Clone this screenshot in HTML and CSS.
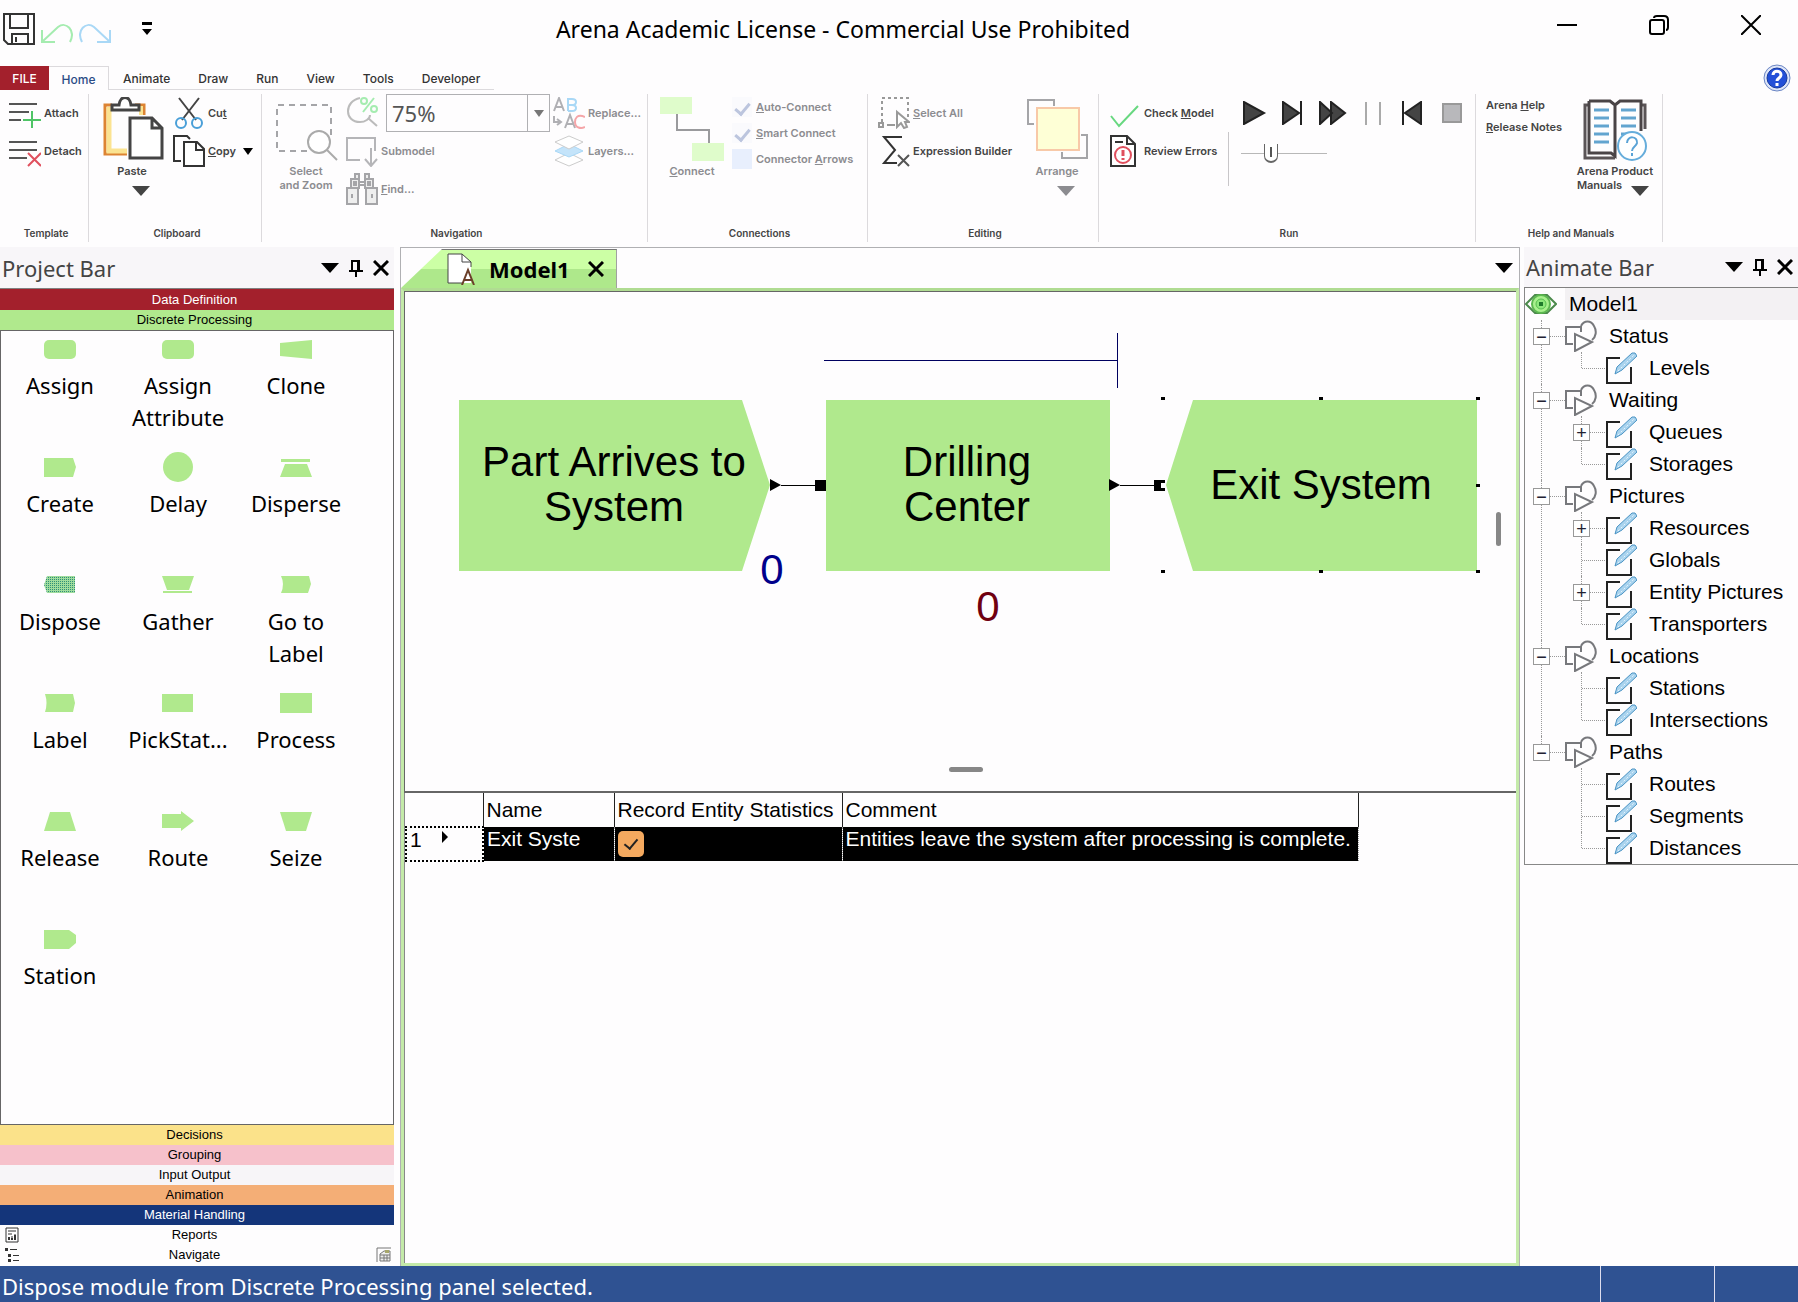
FILE: index.html
```html
<!DOCTYPE html>
<html lang="en">
<head>
<meta charset="utf-8">
<title>Arena Academic License - Commercial Use Prohibited</title>
<link rel="stylesheet" href="styles.css">
</head>
<body>
<svg class="sprite" aria-hidden="true">
  <symbol id="shapes" viewBox="0 0 32 32"><g fill="none" stroke="#77787c" stroke-width="2"><path d="M8 24H1V7h15v5"/><path d="M16 6c3-6 10-6 13 0 3 5 2 11-2 14"/><path fill="#fff" d="M10 14v17l17-9z"/></g></symbol>
  <symbol id="edit" viewBox="0 0 32 32"><path d="M15 6H2v25h24V15" fill="none" stroke="#222" stroke-width="2"/><path d="M10 22l2-7L27 1h3l2 3-15 14z" fill="#a9d3ee" stroke="#4a93c4" stroke-width="1"/><path d="M13 19L29 3" stroke="#e8f5fd" stroke-width="1" stroke-dasharray="2 2"/></symbol>
  <symbol id="down" viewBox="0 0 18 10"><path d="M0 0h18l-9 10z" fill="currentColor"/></symbol>
  <symbol id="pin" viewBox="0 0 14 18"><path d="M3 11V2h7v9M0 12h14M7 12v6" fill="none" stroke="#000" stroke-width="2"/><path d="M8 2h3v9H8z"/></symbol>
  <symbol id="cross" viewBox="0 0 16 16"><path d="M1 1l14 14M15 1L1 15" stroke="#000" stroke-width="3" fill="none"/></symbol>
  <symbol id="pausebars" viewBox="0 0 30 24"><path d="M7 1v23M21 1v23" stroke="#aaa" stroke-width="2"/></symbol>
</svg>

<header class="titlebar">
  <div class="quick">
    <button class="bare" aria-label="Save"><svg width="32" height="32" viewBox="0 0 32 32"><path d="M1 1h30v30H5l-4-4zM7 1v14h18V1M9 31V21h16v10M13 24v5" fill="none" stroke="#333" stroke-width="2"/></svg></button>
    <button class="bare" aria-label="Undo"><svg width="32" height="32" viewBox="0 0 32 32"><path d="M1 17v12h13M2 28L17 14c8-6 18 3 12 15" fill="none" stroke="#a5ecb0" stroke-width="2"/></svg></button>
    <button class="bare" aria-label="Redo"><svg width="32" height="32" viewBox="0 0 32 32"><path d="M31 17v12H18M30 28L15 14C7 8-3 17 3 29" fill="none" stroke="#a9d8f6" stroke-width="2"/></svg></button>
    <button class="bare customize" aria-label="Customize toolbar"><svg width="10" height="14" viewBox="0 0 10 14"><path d="M0 0h10v3H0zM0 7h10l-5 6z"/></svg></button>
  </div>
  <h1>Arena Academic License - Commercial Use Prohibited</h1>
  <div class="window-buttons">
    <button class="bare" aria-label="Minimize"><svg width="20" height="20" viewBox="0 0 20 20"><path d="M0 10h20" stroke="#000" stroke-width="2"/></svg></button>
    <button class="bare" aria-label="Restore"><svg width="20" height="20" viewBox="0 0 20 20"><g fill="none" stroke="#000" stroke-width="2"><rect x="1" y="5" width="14" height="14" rx="2"/><path d="M5 3q0-2 3-2h7q4 0 4 4v7q0 3-2 3"/></g></svg></button>
    <button class="bare" aria-label="Close"><svg width="20" height="20" viewBox="0 0 20 20"><path d="M0 0l20 20M20 0L0 20" stroke="#000" stroke-width="2"/></svg></button>
  </div>
</header>

<nav class="tabs">
  <button class="tab file">FILE</button><button class="tab active">Home</button><button class="tab">Animate</button><button class="tab">Draw</button><button class="tab">Run</button><button class="tab">View</button><button class="tab">Tools</button><button class="tab">Developer</button>
  <button class="bare help" aria-label="Help"><svg width="28" height="28" viewBox="0 0 28 28"><circle cx="14" cy="14" r="13" fill="#dfe6f8" stroke="#6b86c4" stroke-width="1"/><circle cx="14" cy="14" r="10" fill="#2350d8" stroke="#173a9c"/><path d="M10 11c0-5 8-5 8 0 0 3-4 3-4 6M14 19v3" fill="none" stroke="#fff" stroke-width="3"/></svg></button>
</nav>

<div class="ribbon">
  <section class="group g-template">
    <div class="group-body">
      <div class="stack">
        <button class="cmd"><svg width="32" height="32" viewBox="0 0 32 32"><path d="M0 7h28M0 15h20M0 23h12" stroke="#555" stroke-width="2"/><path d="M23 14v17M14 23h18" stroke="#4fc466" stroke-width="2"/></svg>Attach</button>
        <button class="cmd"><svg width="32" height="32" viewBox="0 0 32 32"><path d="M0 7h28M0 15h28M0 23h18" stroke="#555" stroke-width="2"/><path d="M19 18l13 13M32 18L19 31" stroke="#e0505e" stroke-width="2"/></svg>Detach</button>
      </div>
    </div>
    <h2>Template</h2>
  </section>
  <section class="group g-clipboard">
    <div class="group-body">
      <button class="big"><svg width="64" height="64" viewBox="0 0 64 64"><path d="M12 8H5v49h22" fill="none" stroke="#dd8433" stroke-width="3"/><path d="M9 10v44h18" fill="none" stroke="#fbe391" stroke-width="5"/><path d="M35 8h9v10" fill="none" stroke="#dd8433" stroke-width="3"/><path d="M36 11h5v7" fill="none" stroke="#fbe391" stroke-width="4"/><path d="M12 13V8h7c1-10 11-10 12 0h8v5z" fill="#fff" stroke="#444" stroke-width="3"/><path d="M30 21h22l10 10v30H30zM52 21v10h10" fill="#fff" stroke="#444" stroke-width="3"/></svg><span>Paste</span><svg class="drop shift" width="18" height="10"><use href="#down"/></svg></button>
      <div class="stack">
        <button class="cmd"><svg width="32" height="32" viewBox="0 0 32 32"><path d="M6 1l17 22M26 1L9 23" stroke="#444" stroke-width="2"/><circle cx="8" cy="26" r="5" fill="none" stroke="#4a9fd8" stroke-width="2"/><circle cx="24" cy="26" r="5" fill="none" stroke="#4a9fd8" stroke-width="2"/></svg><span>Cu<u>t</u></span></button>
        <button class="cmd"><svg width="32" height="32" viewBox="0 0 32 32"><path d="M8 26H1V1h13l3 3" fill="none" stroke="#333" stroke-width="2"/><path d="M11 7h13l7 7v17H11zM23 8v7h8" fill="#fff" stroke="#333" stroke-width="2"/></svg><span><u>C</u>opy</span><svg class="copy-drop" width="10" height="7" viewBox="0 0 10 7"><path d="M0 0h10L5 7z"/></svg></button>
      </div>
    </div>
    <h2>Clipboard</h2>
  </section>
  <section class="group g-navigation">
    <div class="group-body">
      <button class="big dim"><svg width="64" height="64" viewBox="0 0 64 64"><path d="M33 54H3V8h54v32" fill="none" stroke="#a5a5a8" stroke-width="2" stroke-dasharray="6 5"/><circle cx="45" cy="45" r="11" fill="#fff" stroke="#aaa" stroke-width="2"/><path d="M53 53l10 10" stroke="#aaa" stroke-width="2"/></svg><span>Select<br>and Zoom</span></button>
      <div class="stack">
        <div class="zoom-row"><svg width="32" height="32" viewBox="0 0 32 32"><path d="M14 1c-16 3-16 24 0 24 5 0 10-3 10-7M22 21l9 8" fill="none" stroke="#bbb" stroke-width="2"/><path d="M28 1L17 15" stroke="#a5ecb0" stroke-width="2"/><circle cx="18" cy="4" r="3" fill="none" stroke="#a5ecb0" stroke-width="2"/><circle cx="28" cy="12" r="3" fill="none" stroke="#a5ecb0" stroke-width="2"/></svg>
          <div class="combo"><input type="text" value="75%" aria-label="Zoom level"><button class="bare" aria-label="Choose zoom"><svg width="10" height="7" viewBox="0 0 10 7"><path d="M0 0h10L5 7z" fill="#777"/></svg></button></div></div>
        <button class="cmd dim"><svg width="32" height="32" viewBox="0 0 32 32"><path d="M14 25H1V3h28v13" fill="none" stroke="#b5b5b8" stroke-width="2"/><path d="M25 13v17M19 24l6 7 6-7" fill="none" stroke="#b5b5b8" stroke-width="2"/></svg>Submodel</button>
        <button class="cmd dim"><svg width="32" height="32" viewBox="0 0 32 32"><g fill="#eee" stroke="#a5a5a8" stroke-width="2"><path d="M9 1h4v5H9zM19 1h4v5h-4zM5 6h8v9H5zM19 6h8v9h-8zM1 15h11v16H1zM20 15h11v16H20zM8 9h2v3H8zM22 9h2v3h-2zM6 21v4M26 21v4M13 9h6M13 12h6"/></g></svg><span><u>F</u>ind...</span></button>
      </div>
      <div class="stack">
        <button class="cmd dim"><svg width="32" height="32" viewBox="0 0 32 32"><g fill="none" stroke-width="2"><path d="M1 14L6 1l5 13M3 10h6M12 31l5-13 5 13M14 27h6M1 19v6h6M4 22l4 3-4 3" stroke="#b0b0b4"/><path d="M15 1v13M15 2h4q4 0 4 3t-4 3h-4M19 8q4 0 4 3t-4 3h-4" stroke="#a9d8f6"/><path d="M32 20c-8-4-10 2-10 5 0 6 6 7 10 5" stroke="#f5a5a8"/></g></svg>Replace...</button>
        <button class="cmd dim"><svg width="32" height="32" viewBox="0 0 32 32"><path d="M2 25l14-7 14 7-14 6z" fill="#fff" stroke="#ccc"/><path d="M2 16l14-7 14 7-14 6z" fill="#c4e4fa" stroke="#a9d8f6"/><path d="M2 7l14-6 14 6-14 7z" fill="#fff" stroke="#ccc"/></svg>Layers...</button>
      </div>
    </div>
    <h2>Navigation</h2>
  </section>
  <section class="group g-connections">
    <div class="group-body">
      <button class="big dim"><svg width="64" height="64" viewBox="0 0 64 64"><path d="M17 17v16h32v14" fill="none" stroke="#9a9a9d" stroke-width="2"/><path d="M0 0h32v17H0zM32 46h32v18H32z" fill="#dffccb"/></svg><span><u>C</u>onnect</span></button>
      <div class="checks">
        <label class="check"><input type="checkbox" checked disabled><span><u>A</u>uto-Connect</span></label>
        <label class="check"><input type="checkbox" checked disabled><span><u>S</u>mart Connect</span></label>
        <label class="check"><input type="checkbox" disabled><span>Connector <u>A</u>rrows</span></label>
      </div>
    </div>
    <h2>Connections</h2>
  </section>
  <section class="group g-editing">
    <div class="group-body">
      <div class="stack">
        <button class="cmd dim"><svg width="32" height="32" viewBox="0 0 32 32"><path d="M4 25V1h26v22" fill="none" stroke="#999" stroke-width="2" stroke-dasharray="3 3"/><path d="M1 26h4v4H1zM9 28h8" fill="none" stroke="#999" stroke-width="2"/><path d="M19 15v15l4-4 3 5 3-1-2-5h4z" fill="#fff" stroke="#999" stroke-width="2"/></svg><span><u>S</u>elect All</span></button>
        <button class="cmd"><svg width="32" height="32" viewBox="0 0 32 32"><path d="M24 2H6l11 13L6 28h13" fill="none" stroke="#333" stroke-width="2"/><path d="M20 20l11 11M31 20L20 31" stroke="#555" stroke-width="2"/></svg>Expression Builder</button>
      </div>
      <button class="big dim"><svg width="64" height="64" viewBox="0 0 64 64"><path d="M9 27H3V3h26v6M56 38h6v23H37v-6" fill="none" stroke="#a5a5a8" stroke-width="2"/><rect x="12" y="11" width="42" height="42" fill="#feffd6" stroke="#f8c9a8" stroke-width="2"/></svg><span>Arrange</span><svg class="drop shift" width="18" height="10"><use href="#down"/></svg></button>
    </div>
    <h2>Editing</h2>
  </section>
  <section class="group g-run">
    <div class="group-body">
      <div class="stack">
        <button class="cmd"><svg width="32" height="32" viewBox="0 0 32 32"><path d="M2 19l8 10L29 9" fill="none" stroke="#68d880" stroke-width="2"/></svg><span>Check <u>M</u>odel</span></button>
        <button class="cmd"><svg width="32" height="32" viewBox="0 0 32 32"><path d="M2 1h16l8 8v22H2zM18 1v8h8M6 7h8" fill="#fff" stroke="#333" stroke-width="2"/><circle cx="14" cy="20" r="8" fill="#fff" stroke="#e0505e" stroke-width="2"/><path d="M14 15v6M14 23v2" stroke="#e0505e" stroke-width="3"/></svg>Review Errors</button>
      </div>
      <div class="rule"></div>
      <div class="player">
        <div class="transport">
          <button class="bare" aria-label="Go"><svg width="30" height="24" viewBox="0 0 30 24"><path d="M5 1v22l20-11z" fill="#444" stroke="#222" stroke-width="2"/></svg></button>
          <button class="bare" aria-label="Step"><svg width="30" height="24" viewBox="0 0 30 24"><path d="M4 1v22l16-11z" fill="#444" stroke="#222" stroke-width="2"/><path d="M22 0v24" stroke="#222" stroke-width="2"/></svg></button>
          <button class="bare" aria-label="Fast forward"><svg width="30" height="24" viewBox="0 0 30 24"><path d="M1 1v22l12-11zM12 1v22l14-11z" fill="#444" stroke="#222" stroke-width="2"/></svg></button>
          <button class="bare" aria-label="Pause"><svg width="30" height="24"><use href="#pausebars"/></svg></button>
          <button class="bare" aria-label="Start over"><svg width="30" height="24" viewBox="0 0 30 24"><path d="M22 1v22L6 12z" fill="#444" stroke="#222" stroke-width="2"/><path d="M4 0v24" stroke="#222" stroke-width="2"/></svg></button>
          <button class="bare" aria-label="End"><svg width="30" height="24" viewBox="0 0 30 24"><rect x="4" y="3" width="18" height="18" fill="#b8b8bb" stroke="#999" stroke-width="2"/></svg></button>
        </div>
        <input class="speed" type="range" min="0" max="100" value="32" aria-label="Run speed">
      </div>
    </div>
    <h2>Run</h2>
  </section>
  <section class="group g-help">
    <div class="group-body">
      <div class="links"><a href="#help">Arena <u>H</u>elp</a><a href="#notes"><u>R</u>elease Notes</a></div>
      <button class="big manuals"><svg width="64" height="64" viewBox="0 0 64 64"><path d="M6 8H2v53h30M58 8h4v24" fill="none" stroke="#5a5456" stroke-width="3"/><path d="M6 4h21l5 4 5-4h21v30M6 4v52h22l4 3V8" fill="none" stroke="#4a4446" stroke-width="3"/><path d="M11 13h15M11 21h15M11 29h15M11 37h15M11 45h15M38 13h15M38 21h15M38 29h15M38 37h7" stroke="#62a4cf" stroke-width="3"/><circle cx="49" cy="49" r="14" fill="#fff" stroke="#66addb" stroke-width="2"/><path d="M44 46c0-8 11-7 10 0-1 4-5 4-5 8M49 56v3" fill="none" stroke="#5aa3d6" stroke-width="2"/></svg><span>Arena Product</span><span class="manual-row">Manuals <svg class="drop" width="18" height="10"><use href="#down"/></svg></span></button>
    </div>
    <h2>Help and Manuals</h2>
  </section>
</div>

<main class="workspace">
  <aside class="dock project">
    <div class="dock-head"><h2>Project Bar</h2>
      <button class="bare" aria-label="Panel menu"><svg width="18" height="10"><use href="#down"/></svg></button><button class="bare" aria-label="Pin panel"><svg width="14" height="18"><use href="#pin"/></svg></button><button class="bare" aria-label="Close panel"><svg width="16" height="16"><use href="#cross"/></svg></button></div>
    <button class="panel p-red">Data Definition</button>
    <button class="panel p-green">Discrete Processing</button>
    <div class="modules">
      <button class="module"><svg viewBox="0 0 32 32"><rect y="7" width="32" height="19" rx="5"/></svg>Assign</button>
      <button class="module"><svg viewBox="0 0 32 32"><rect y="7" width="32" height="19" rx="5"/></svg>Assign Attribute</button>
      <button class="module"><svg viewBox="0 0 32 32"><path d="M0 10l32-3v19L0 23z"/></svg>Clone</button>
      <button class="module"><svg viewBox="0 0 32 32"><path d="M0 7h29l3 9-3 10H0z"/></svg>Create</button>
      <button class="module"><svg viewBox="0 0 32 32"><circle cx="16" cy="16" r="15"/></svg>Delay</button>
      <button class="module"><svg viewBox="0 0 32 32"><path d="M1 8h29v3H1zM5 13h22l5 13H0z"/></svg>Disperse</button>
      <button class="module"><svg viewBox="0 0 32 32"><defs><pattern id="dots" width="2" height="2" patternUnits="userSpaceOnUse"><rect width="2" height="2" fill="#9fdc9c"/><rect width="1" height="1" fill="#2f8f78"/></pattern></defs><path fill="url(#dots)" d="M3 7h28v17H3l-3-8z"/></svg>Dispose</button>
      <button class="module"><svg viewBox="0 0 32 32"><path d="M0 7h32l-5 14H5zM1 22h29v2H1z"/></svg>Gather</button>
      <button class="module"><svg viewBox="0 0 32 32"><path d="M1 7h28l2 8-3 9H1q4-9 0-17z"/></svg>Go to Label</button>
      <button class="module"><svg viewBox="0 0 32 32"><path d="M1 7h28l2 9-2 9H1q3-9 0-18z"/></svg>Label</button>
      <button class="module"><svg viewBox="0 0 32 32"><path d="M0 7h31v18H0z"/></svg>PickStat...</button>
      <button class="module"><svg viewBox="0 0 32 32"><path d="M0 6h32v20H0z"/></svg>Process</button>
      <button class="module"><svg viewBox="0 0 32 32"><path d="M6 7h20l6 19H0z"/></svg>Release</button>
      <button class="module"><svg viewBox="0 0 32 32"><path d="M0 9h19V6l13 10-13 10v-3H0z"/></svg>Route</button>
      <button class="module"><svg viewBox="0 0 32 32"><path d="M0 7h32l-6 19H6z"/></svg>Seize</button>
      <button class="module"><svg viewBox="0 0 32 32"><path d="M0 7h25l7 5v8l-7 6H0z"/></svg>Station</button>
    </div>
    <button class="panel p-yellow">Decisions</button>
    <button class="panel p-pink">Grouping</button>
    <button class="panel p-gray">Input Output</button>
    <button class="panel p-orange">Animation</button>
    <button class="panel p-navy">Material Handling</button>
    <button class="panel p-plain"><svg width="14" height="16" viewBox="0 0 14 16"><path d="M1 1h12v14H1zM3 4h8M3 7h4M4 13v-3M7 13V9M10 13V7" fill="none" stroke="#333" stroke-width="1"/><path d="M3 10h2v3H3zM6 11h2v2H6zM9 8h2v5H9z" fill="#333"/></svg><span>Reports</span></button>
    <button class="panel p-plain"><svg width="14" height="16" viewBox="0 0 14 16"><path d="M0 1h3v3H0zM3 7h3v3H3zM3 12h3v3H3zM5 2h7v1H5zM8 8h6v1H8zM8 13h6v1H8z" fill="#333"/></svg><span>Navigate</span><svg width="15" height="16" viewBox="0 0 15 16"><path d="M1 15V1h14" fill="none" stroke="#777"/><path d="M4 7l4-3h6v10H4zM4 8h10M4 11h10M8 8v6M11 8v6" fill="#eee" stroke="#777"/><path d="M9 3h4v3H9z" fill="#a7a76a"/></svg></button>
  </aside>

  <section class="document">
    <div class="doc-tabs">
      <div class="doc-tab"><svg width="30" height="32" viewBox="0 0 30 32"><path d="M1 1h14l9 8v21H1z" fill="#fff"/><path d="M15 30H1V1h14l9 8v5M15 1v8h9" fill="none" stroke="#444"/><path d="M15 32l6-15 6 15M17 27h8" fill="none" stroke="#6b3f2a" stroke-width="2"/></svg><span>Model1</span><button class="bare" aria-label="Close Model1"><svg width="16" height="16"><use href="#cross"/></svg></button></div>
      <button class="bare doc-list" aria-label="Open documents"><svg width="18" height="10"><use href="#down"/></svg></button>
    </div>
    <div class="doc-body">
      <div class="canvas">
        <svg class="flow" width="1110" height="499" viewBox="405 292 1110 499" role="img" aria-label="Process flowchart">
          <path class="crisp" d="M824 360h293v1H824zM1117 333h1v55h-1z" fill="#000060"/>
          <g fill="#b0e98d"><path d="M459 400h283l28 85-28 86H459zM826 400h284v171H826zM1193 400h284v171h-284l-27-86z"/></g>
          <path class="crisp" d="M781 485h34v1h-34zM1120 485h34v1h-34z"/>
          <path d="M770 479l11 6-11 6zM815 480h11v11h-11zM1109 479l11 6-11 6zM1154 480h11v3h-4v5h4v3h-11z"/>
          <path d="M1161 397h4v3h-4zM1319 397h4v3h-4zM1476 397h4v3h-4zM1161 570h4v3h-4zM1319 570h4v3h-4zM1476 570h4v3h-4zM1476 484h4v3h-4z"/>
          <g class="node-text"><text x="614" y="476">Part Arrives to</text><text x="614" y="521">System</text><text x="967" y="476">Drilling</text><text x="967" y="521">Center</text><text x="1321" y="499">Exit System</text></g>
          <g class="counter"><text class="blue" x="772" y="584">0</text><text class="maroon" x="988" y="621">0</text></g>
        </svg>
        <i class="thumb-v"></i><i class="thumb-h"></i>
      </div>
      <div class="sheet">
        <table>
          <colgroup><col class="c-row"><col class="c-name"><col class="c-record"><col class="c-comment"></colgroup>
          <thead><tr><th></th><th>Name</th><th>Record Entity Statistics</th><th>Comment</th></tr></thead>
          <tbody><tr><th scope="row"><span>1</span><svg width="6" height="12" viewBox="0 0 6 12"><path d="M0 0l6 6-6 6z"/></svg></th><td>Exit Syste</td><td><input type="checkbox" checked aria-label="Record entity statistics"></td><td>Entities leave the system after processing is complete.</td></tr></tbody>
        </table>
      </div>
    </div>
  </section>

  <aside class="dock animate">
    <div class="dock-head"><h2>Animate Bar</h2>
      <button class="bare" aria-label="Panel menu"><svg width="18" height="10"><use href="#down"/></svg></button><button class="bare" aria-label="Pin panel"><svg width="14" height="18"><use href="#pin"/></svg></button><button class="bare" aria-label="Close panel"><svg width="16" height="16"><use href="#cross"/></svg></button></div>
    <div class="tree">
      <div class="root"><svg width="32" height="32" viewBox="0 0 32 32"><path d="M1 16L10 7h12l9 9-9 9H10z" fill="#fff" stroke="#4c8a4c" stroke-width="2"/><circle cx="16" cy="16" r="9" fill="#a9f08e" stroke="#5cb850" stroke-width="2"/><circle cx="16" cy="16" r="5" fill="#8fe87c" stroke="#58c050"/><path d="M14 14h4v4h-4z" fill="#1f7a2c"/></svg><span>Model1</span></div>
      <ul class="level1">
        <li><div class="node"><button class="box">−</button><svg><use href="#shapes"/></svg>Status</div>
          <ul><li><div class="node"><svg><use href="#edit"/></svg>Levels</div></li></ul></li>
        <li><div class="node"><button class="box">−</button><svg><use href="#shapes"/></svg>Waiting</div>
          <ul><li><div class="node"><button class="box">+</button><svg><use href="#edit"/></svg>Queues</div></li><li><div class="node"><svg><use href="#edit"/></svg>Storages</div></li></ul></li>
        <li><div class="node"><button class="box">−</button><svg><use href="#shapes"/></svg>Pictures</div>
          <ul><li><div class="node"><button class="box">+</button><svg><use href="#edit"/></svg>Resources</div></li><li><div class="node"><svg><use href="#edit"/></svg>Globals</div></li><li><div class="node"><button class="box">+</button><svg><use href="#edit"/></svg>Entity Pictures</div></li><li><div class="node"><svg><use href="#edit"/></svg>Transporters</div></li></ul></li>
        <li><div class="node"><button class="box">−</button><svg><use href="#shapes"/></svg>Locations</div>
          <ul><li><div class="node"><svg><use href="#edit"/></svg>Stations</div></li><li><div class="node"><svg><use href="#edit"/></svg>Intersections</div></li></ul></li>
        <li><div class="node"><button class="box">−</button><svg><use href="#shapes"/></svg>Paths</div>
          <ul><li><div class="node"><svg><use href="#edit"/></svg>Routes</div></li><li><div class="node"><svg><use href="#edit"/></svg>Segments</div></li><li><div class="node"><svg><use href="#edit"/></svg>Distances</div></li></ul></li>
      </ul>
    </div>
  </aside>
</main>

<footer class="status"><span>Dispose module from Discrete Processing panel selected.</span><i></i><i></i></footer>
</body>
</html>
```
FILE: styles.css
```css
* { box-sizing: border-box; }
html, body { height: 100%; }
body { margin: 0; display: flex; flex-direction: column; background: #fefdfe; color: #000; font-family: "Noto Sans", sans-serif; overflow: hidden; }
button, input { font: inherit; color: inherit; margin: 0; }
button { padding: 0; border: 0; background: none; }
h1, h2 { margin: 0; font-weight: 400; }
svg { display: block; flex: none; }
.sprite { position: absolute; width: 0; height: 0; }
.bare { display: flex; align-items: center; justify-content: center; }

.titlebar { display: grid; grid-template-columns: 280px 1fr 392px; align-items: center; height: 58px; flex: none; }
.quick { display: flex; gap: 6px; padding-left: 3px; }
.customize { width: 60px; }
.titlebar h1 { font-size: 23px; line-height: 32px; text-align: center; }
.window-buttons { display: flex; justify-content: flex-end; gap: 72px; padding: 0 37px 8px 0; }

.tabs { display: flex; height: 32px; padding-top: 8px; flex: none; font: 500 12px/24px Inter, sans-serif; color: #333; }
.tab { height: 24px; padding: 2px 14px 0; border-bottom: 1px solid #dcdadd; line-height: 21px; }
.tab.file { width: 49px; padding: 2px 0 0; background: #a3202c; color: #fff; border-bottom-color: #a3202c; }
.tab.active { width: 60px; padding: 1px 0 0; color: #2b4c86; border: 1px solid #dcdadd; border-width: 1px 1px 0 0; }
.help { margin: -2px 7px 0 auto; height: 28px; }

.ribbon { display: flex; height: 157px; padding-top: 4px; flex: none; font: 600 11px/14px Inter, sans-serif; color: #444; }
.group { display: flex; flex-direction: column; justify-content: space-between; height: 148px; padding-bottom: 1px; border-right: 1px solid #dcdadd; flex: none; }
.group h2 { padding-left: 4px; font-size: 10px; font-weight: 600; line-height: 16px; text-align: center; }
.group-body { display: flex; padding-top: 3px; }
.g-template { width: 89px; } .g-clipboard { width: 173px; } .g-navigation { width: 386px; }
.g-connections { width: 220px; } .g-editing { width: 231px; } .g-run { width: 377px; } .g-help { width: 187px; }
.stack { display: flex; flex-direction: column; gap: 6px; }
.cmd { display: flex; align-items: center; gap: 3px; height: 32px; white-space: nowrap; }
.dim { color: #8c8c90; }
.big { display: flex; flex-direction: column; align-items: center; width: 64px; height: 110px; }
.big > span { padding-top: 3px; white-space: nowrap; }
.shift { margin: 8px 0 0 18px; }
.g-template .stack { padding-left: 9px; }
.g-clipboard .big { margin: 0 9px 0 11px; }
.copy-drop { margin-left: 4px; }
.g-navigation .big { margin: 0 8px 0 12px; }
.g-navigation .stack + .stack { margin-left: 3px; }
.zoom-row { display: flex; gap: 8px; height: 32px; }
.combo { display: flex; width: 164px; height: 38px; margin-top: -3px; border: 1px solid #b0b0b3; }
.combo input { flex: 1; min-width: 0; padding: 0 5px; border: 0; background: none; font: 22px "Noto Sans", sans-serif; color: #555; outline: 0; }
.combo button { width: 22px; border-left: 1px solid #b0b0b3; }
.g-connections .big { margin: 0 8px 0 12px; }
.checks { display: flex; flex-direction: column; gap: 6px; color: #8c8c90; }
.check { display: flex; align-items: center; gap: 4px; height: 20px; white-space: nowrap; }
.check input { appearance: none; width: 20px; height: 20px; background: #e8effd; display: grid; place-items: center; }
.check input:checked { background: #fafafd; }
.check input:checked::after { content: ""; width: 6px; height: 12px; border: solid #bcc5de; border-width: 0 3px 3px 0; transform: rotate(40deg); }
.g-editing .group-body { justify-content: space-between; padding-left: 10px; padding-right: 9px; }
.g-run .group-body { padding-left: 10px; }
.g-run .stack { width: 119px; }
.rule { width: 1px; height: 54px; margin-top: 35px; background: #c8c6c9; }
.player { padding-left: 10px; }
.transport { display: flex; gap: 10px; padding-top: 4px; }
.speed { appearance: none; display: block; width: 86px; height: 20px; margin: 18px 0 0 2px; background: linear-gradient(#b8b8b8, #b8b8b8) center / 100% 1px no-repeat; }
.speed::-webkit-slider-thumb { appearance: none; width: 14px; height: 19px; border: solid #666; border-width: 0 1px 2px; border-radius: 0 0 7px 7px; background: linear-gradient(#555, #555) center / 2px 10px no-repeat #fff; }
.links { display: flex; flex-direction: column; gap: 8px; width: 98px; padding: 1px 0 0 10px; white-space: nowrap; }
.links a { color: inherit; text-decoration: none; }
.big.manuals { width: 82px; }
.manual-row { display: flex; align-items: flex-end; gap: 9px; }
.big > .manual-row { padding: 0 4px 0 0; }
.manual-row .drop { margin-bottom: -4px; }

.workspace { display: grid; grid-template-columns: 395px 1fr 274px; column-gap: 4px; flex: 1; min-height: 0; }
.dock { display: flex; flex-direction: column; min-height: 0; }
.project { margin-right: 1px; padding-bottom: 1px; }
.document { margin-left: 1px; }
.dock-head { display: flex; align-items: center; gap: 10px; height: 42px; flex: none; padding: 0 5px 0 2px; background: #f8f6f9; border-bottom: 1px solid #808080; }
.dock-head h2 { flex: 1; font-size: 22px; line-height: 32px; color: #444; }
.panel { height: 20px; flex: none; font: 13px/20px "Liberation Sans", sans-serif; text-align: center; padding-right: 5px; }
.p-red { height: 21px; padding-top: 1px; background: #a3202c; color: #fff; } .p-green { background: #b0e98d; }
.p-yellow { background: #fbe28a; } .p-pink { background: #f6c1cb; } .p-gray { background: #f7f5f8; }
.p-orange { background: #f4ae76; } .p-navy { background: #14357a; color: #fff; }
.p-plain { display: grid; grid-template-columns: 15px 1fr 15px; align-items: center; padding: 0 3px 0 5px; }
.p-plain span { padding-right: 7px; }
.modules { flex: 1; min-height: 0; display: grid; grid-template-columns: repeat(3, 118px); grid-auto-rows: 118px; padding-top: 2px; border: 1px solid #666; }
.module { display: flex; flex-direction: column; align-items: center; justify-content: flex-start; gap: 4px; padding: 0 8px; font-size: 22px; line-height: 32px; }
.module svg { width: 32px; height: 32px; fill: #b0e98d; }

.document { display: flex; flex-direction: column; min-width: 0; min-height: 0; border: 1px solid #b0b0b3; border-width: 1px 1px 0; }
.doc-tabs { display: flex; align-items: flex-end; justify-content: space-between; height: 40px; flex: none; }
.doc-tab { display: flex; align-items: center; gap: 12px; height: 39px; padding: 0 12px 0 46px; background: linear-gradient(#ccffa5 50%, #aee88b 50%); clip-path: polygon(41px 0, 100% 0, 100% 100%, 0 100%); border: solid #777; border-width: 1px 1px 0 0; font-size: 22px; font-weight: 700; }
.doc-tab .bare { margin-left: 6px; }
.doc-list { width: 30px; height: 40px; }
.doc-body { flex: 1; min-height: 0; display: grid; grid-template-rows: auto 1fr; border: 3px solid #c4eaa9; border-top-color: #b0dc92; }
.canvas { position: relative; min-width: 0; overflow: hidden; border: 1px solid #666; border-width: 1px 0 2px 1px; }
.crisp { shape-rendering: crispEdges; }
.node-text { font: 42px "Liberation Sans", sans-serif; text-anchor: middle; }
.counter { font: 42px "Liberation Sans Narrow", "Liberation Sans", sans-serif; text-anchor: middle; }
.blue { fill: #00008b; } .maroon { fill: #700010; }
.thumb-v, .thumb-h { position: absolute; border-radius: 3px; background: #878787; }
.thumb-v { right: 15px; top: 44%; width: 5px; height: 34px; }
.thumb-h { left: 49%; bottom: 19px; width: 34px; height: 5px; }
.sheet { min-height: 0; border-left: 1px solid #888; }
table { border-collapse: collapse; table-layout: fixed; width: 952px; font: 21px/24px "Liberation Sans", sans-serif; }
.c-row { width: 77px; } .c-name { width: 131px; } .c-record { width: 228px; } .c-comment { width: 516px; }
th, td { height: 34px; padding: 0 0 0 3px; font-weight: 400; text-align: left; white-space: nowrap; overflow: hidden; border-right: 1px solid #222; }
tbody td { background: #000; color: #fff; vertical-align: top; border-right: 1px dotted #999; }
tbody td input { appearance: none; display: grid; place-items: center; width: 26px; height: 26px; margin-top: 4px; border-radius: 5px; background: #f4a95f; }
tbody td input::after { content: ""; width: 6px; height: 11px; margin-top: -4px; border: solid #222; border-width: 0 2px 2px 0; transform: rotate(40deg); }
tbody th { border: 2px dotted #000; vertical-align: top; }
tbody th span { display: inline-block; width: 32px; }
tbody th svg { display: inline-block; vertical-align: 4px; }

.animate .dock-head { height: 41px; }
.tree { border: 1px solid #888; border-width: 0 0 1px 1px; font: 21px/32px "Liberation Sans", sans-serif; }
.root { display: flex; }
.root span { flex: 1; margin-left: 8px; padding-left: 4px; background: #f3f1f3; }
.tree ul { list-style: none; margin: 0; padding: 0; }
.tree ul ul { padding-left: 40px; }
.tree li { position: relative; }
.tree li::before { content: ""; position: absolute; left: 16px; top: 0; bottom: 0; border-left: 1px dotted #999; }
.tree li:last-child::before { bottom: auto; height: 16px; }
.node { position: relative; display: flex; height: 32px; padding-left: 40px; gap: 12px; }
.node::before { content: ""; position: absolute; left: 17px; top: 16px; width: 23px; border-top: 1px dotted #999; }
.node svg { width: 32px; height: 32px; }
.box { position: absolute; left: 8px; top: 8px; width: 17px; height: 17px; border: 1px solid #999; background: #fff; color: #223; font: 18px/14px "Liberation Sans", sans-serif; }

.status { display: flex; height: 36px; flex: none; padding-left: 2px; background: #2f5292; color: #fff; font-size: 22px; line-height: 40px; }
.status span { flex: 1; }
.status i { width: 114px; border-left: 1px solid #dde; }
.status i:last-child { width: 84px; }
```
